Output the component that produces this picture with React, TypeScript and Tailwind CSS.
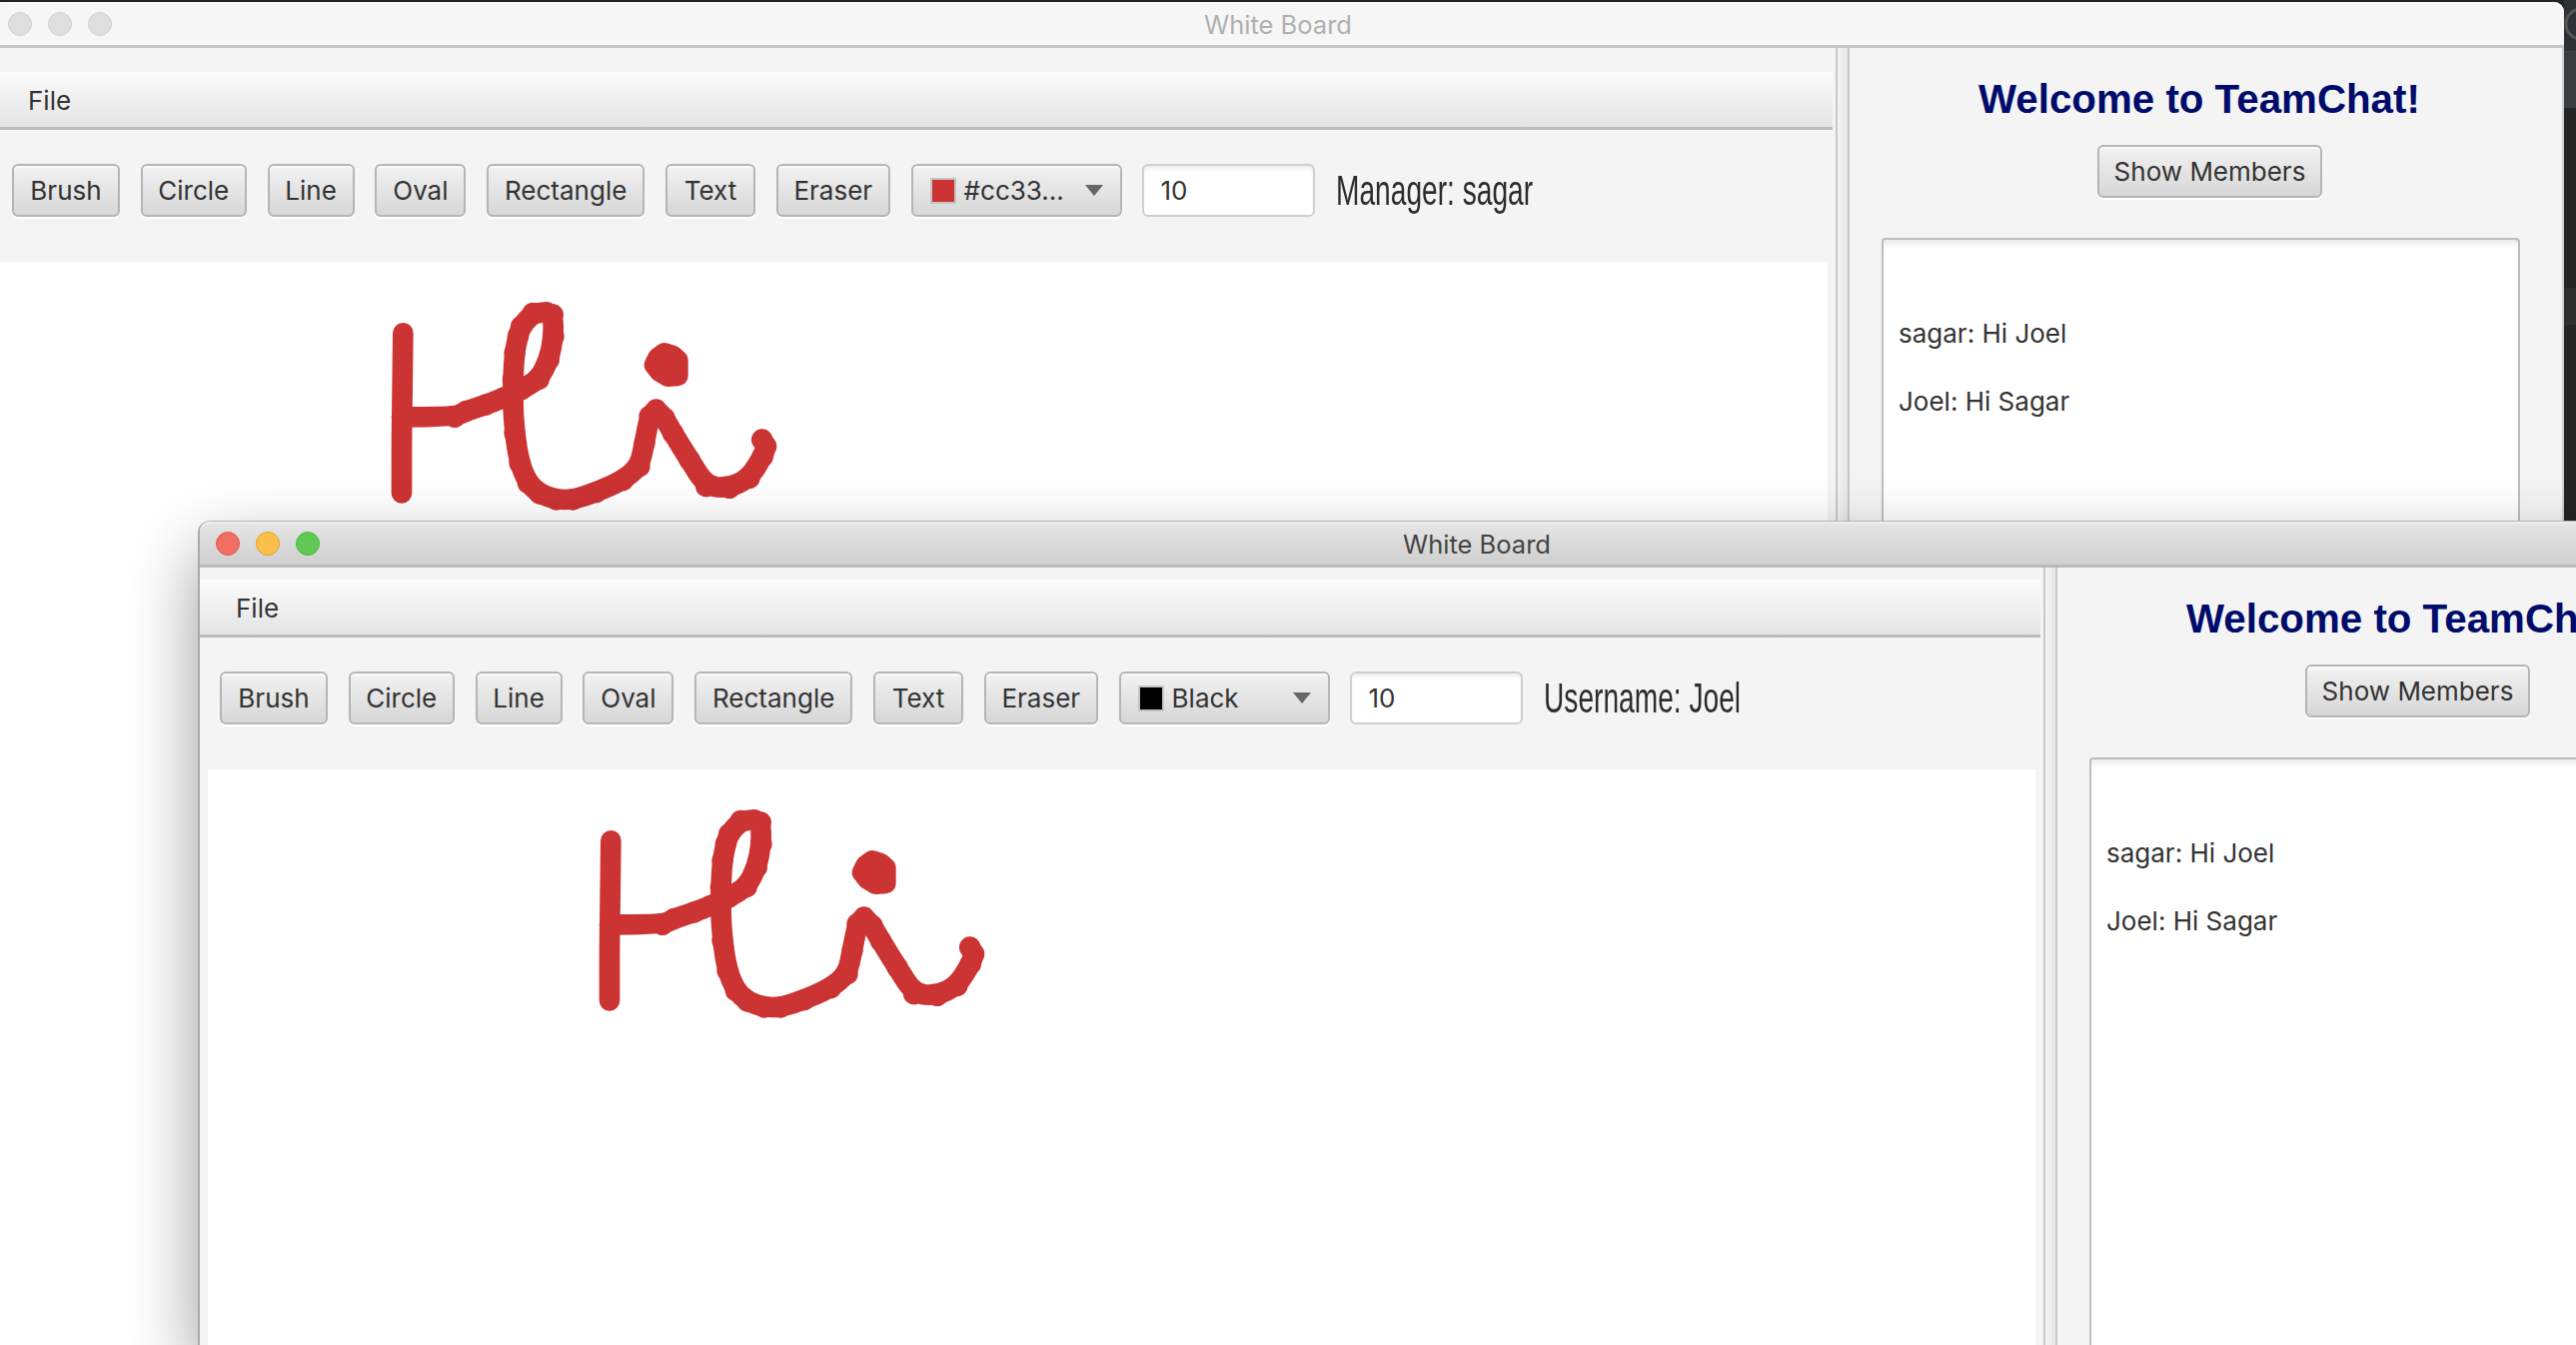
const sysFont = "font-['Inter','Noto_Sans',sans-serif]"

// Stroke centre lines of the handwritten "Hi", in 3x canvas coordinates
const stemPoints: [number, number][] = [[190, 190], [188, 380], [186, 500], [186, 670]]
const curvePoints: [number, number][] = [
  [186, 442], [345, 442], [380, 424], [440, 405], [490, 385], [545, 360], [598, 328], [628, 270], [642, 200], [640, 135],
  [620, 128], [580, 130], [545, 170], [535, 200], [525, 250], [520, 330], [520, 400], [525, 490], [540, 580], [565, 640],
  [600, 672], [650, 690], [700, 690], [770, 668], [850, 632], [900, 590], [915, 520], [930, 440], [950, 420], [975, 445],
  [1000, 490], [1050, 570], [1100, 650], [1170, 655], [1230, 625], [1270, 560], [1280, 530], [1268, 510],
]

// Smooth a polyline through the midpoints of its segments
function smooth(points: [number, number][]): string {
  let d = `M${points[0][0]} ${points[0][1]}`
  for (let i = 1; i < points.length - 1; i++) {
    const [x, y] = points[i]
    const [nx, ny] = points[i + 1]
    d += `Q${x} ${y} ${(x + nx) / 2} ${(y + ny) / 2}`
  }
  const last = points[points.length - 1]
  return `${d}L${last[0]} ${last[1]}`
}

function ToolButton({ label, width }: { label: string; width: string }) {
  return (
    <button
      className={`${width} h-[53px] shrink-0 rounded-[6px] border-2 border-[#b5b5b5] bg-linear-to-b from-[#f2f2f2] to-[#d7d7d7] text-[26px] text-[#333] shadow-[0_2px_0_#fff,inset_0_2px_0_#fafafa] ${sysFont}`}
    >
      {label}
    </button>
  )
}

function HiDrawing({ blurred }: { blurred?: boolean }) {
  return (
    <svg
      viewBox="0 0 1440 810"
      className={`absolute left-[340px] top-[8px] h-[270px] w-[480px] ${blurred ? "blur-[0.6px]" : ""}`}
      fill="none"
      stroke="#cc3333"
      strokeWidth="62"
      strokeLinecap="round"
      strokeLinejoin="round"
    >
      <path d={smooth(stemPoints)} />
      <path d={smooth(curvePoints)} />
      {/* brush stamps give the edge its slight bumps */}
      {curvePoints.slice(1).map(([x, y]) => (
        <circle key={`${x}-${y}`} cx={x} cy={y} r="32" fill="#cc3333" stroke="none" />
      ))}
      <path d="M945 285L955 265L975 250L1000 258L1015 272L1015 318L985 320L960 305Z" fill="#cc3333" />
    </svg>
  )
}

function ChatPanel() {
  return (
    <div className="flex min-w-0 flex-1 flex-col items-start pl-[32px]">
      <h1 className="ml-[97px] mt-[29px] font-['Liberation_Sans',Arial,sans-serif] text-[40.3px] leading-[46px] font-bold whitespace-nowrap text-[#000c6b]">
        Welcome to TeamChat!
      </h1>
      <div className="ml-[216px] mt-[22px]">
        <ToolButton label="Show Members" width="w-[225px]" />
      </div>
      <div
        className={`mt-[40px] w-[639px] flex-1 rounded-t-[4px] border-x-2 border-t-2 border-[#bdbdbd] bg-white pl-[15px] pt-[60px] text-[26px] leading-[68px] text-[#333] shadow-[inset_0_8px_8px_-6px_#e0e0e0] ${sysFont}`}
      >
        <p>sagar: Hi Joel</p>
        <p>Joel: Hi Sagar</p>
      </div>
    </div>
  )
}

function Window({
  active,
  swatch,
  colorName,
  label,
  menuGap,
  titleLeft,
  className,
}: {
  active: boolean
  swatch: string
  colorName: string
  label: string
  menuGap: string
  titleLeft: string
  className: string
}) {
  return (
    <div className={`absolute flex w-[2574px] flex-col rounded-t-[10px] bg-[#f4f4f4] ${className}`}>
      {/* Title bar */}
      <div
        className={`relative h-[46px] shrink-0 rounded-t-[10px] border-b-[3px] ${
          active
            ? "border-[#b9b9b9] bg-linear-to-b from-[#e6e6e6] to-[#cfcfcf] shadow-[inset_0_2px_0_#eee]"
            : "border-[#c6c6c6] bg-[#f6f6f6]"
        }`}
      >
        <div className="flex h-full items-center gap-[16px] pl-[16px]">
          <span className={`size-[24px] rounded-full border ${active ? "border-[#e2574c] bg-[#f26d63]" : "border-[#d4d4d4] bg-[#dfdfdf]"}`} />
          <span className={`size-[24px] rounded-full border ${active ? "border-[#dfa023] bg-[#fbc04c]" : "border-[#d4d4d4] bg-[#dfdfdf]"}`} />
          <span className={`size-[24px] rounded-full border ${active ? "border-[#4fb63c] bg-[#62c855]" : "border-[#d4d4d4] bg-[#dfdfdf]"}`} />
        </div>
        <span
          className={`absolute top-[5px] -translate-x-1/2 text-[25.5px] leading-[36px] ${titleLeft} ${sysFont} ${
            active ? "text-[#444]" : "text-[#b0b0b0]"
          }`}
        >
          White Board
        </span>
      </div>

      <div className="flex min-h-0 flex-1">
        {/* Left pane */}
        <div className={`flex w-[1845px] shrink-0 flex-col ${menuGap}`}>
          <div className={`mr-[3px] flex h-[58px] shrink-0 items-center border-b-[3px] border-[#bcbcbc] bg-linear-to-b from-[#fbfbfb] to-[#e4e4e4] pl-[36px] pt-[1px] text-[26px] text-[#333] ${sysFont}`}>
            File
          </div>
          <div className="flex shrink-0 items-center gap-[20.8px] pb-[45px] pl-[20px] pt-[34px]">
            <ToolButton label="Brush" width="w-[108px]" />
            <ToolButton label="Circle" width="w-[106px]" />
            <ToolButton label="Line" width="w-[87px]" />
            <ToolButton label="Oval" width="w-[91px]" />
            <ToolButton label="Rectangle" width="w-[158px]" />
            <ToolButton label="Text" width="w-[90px]" />
            <ToolButton label="Eraser" width="w-[114px]" />
            <div className={`flex h-[53px] w-[211px] shrink-0 items-center rounded-[6px] border-2 border-[#b5b5b5] bg-linear-to-b from-[#f2f2f2] to-[#d7d7d7] pl-[17px] text-[26px] text-[#333] shadow-[0_2px_0_#fff,inset_0_2px_0_#fafafa] ${sysFont}`}>
              <span className={`h-[26px] w-[26px] shrink-0 border-2 border-[#c4c4c4] ${swatch}`} />
              <span className="ml-[8px] flex-1">{colorName}</span>
              <span className="mr-[17px] h-0 w-0 border-x-[9px] border-t-[11px] border-x-transparent border-t-[#666]" />
            </div>
            <div className={`flex h-[53px] w-[173px] shrink-0 items-center rounded-[6px] border-2 border-[#cfcfcf] bg-white pl-[16px] text-[26px] text-[#333] shadow-[inset_0_4px_4px_-2px_#e8e8e8] ${sysFont}`}>
              10
            </div>
            <span className="origin-left scale-x-[0.67] font-['Liberation_Sans',Arial,sans-serif] text-[42px] leading-[53px] whitespace-nowrap text-[#2c2c2c]">
              {label}
            </span>
          </div>
          <div className="relative ml-[8px] mr-[8px] min-h-0 flex-1 bg-white">
            <HiDrawing blurred={active} />
          </div>
        </div>

        {/* Split divider */}
        <div className="w-[14px] shrink-0 border-x-2 border-[#c8c8c8] bg-linear-to-r from-[#f4f4f4] to-[#e6e6e6]" />

        <ChatPanel />
      </div>
    </div>
  )
}

export default function App() {
  return (
    <div className="relative h-[1346px] w-[2578px] overflow-hidden bg-[#242424]">
      {/* Desktop showing to the right of the back window */}
      <div className="absolute right-0 top-0 flex w-[12px] flex-col">
        <div className="h-[52px] border-b border-[#444] bg-[#2f3234]" />
        <div className="h-[56px] bg-[#3a3d3f]" />
        <div className="mt-[180px] h-[37px] bg-[#2e2e2e]" />
      </div>
      <svg className="absolute right-0 top-[6px] h-[36px] w-[12px]" viewBox="0 0 12 36" fill="none" stroke="#555" strokeWidth="3">
        <circle cx="17" cy="18" r="15" />
      </svg>

      <Window
        active={false}
        swatch="bg-[#cc3333]"
        colorName="#cc33..."
        label="Manager: sagar"
        menuGap="pt-[24px]"
        titleLeft="left-[1287px]"
        className="left-[-8px] top-[2px] h-[1344px] shadow-[inset_-2px_0_0_#d0d0d0]"
      />
      <Window
        active
        swatch="bg-black"
        colorName="Black"
        label="Username: Joel"
        menuGap="pt-[12px]"
        titleLeft="left-[1278px]"
        className="left-[200px] top-[522px] h-[824px] shadow-[-2px_0_0_#aaa,0_-1px_0_#b5b5b5,0_30px_70px_rgba(0,0,0,0.42)]"
      />
    </div>
  )
}
